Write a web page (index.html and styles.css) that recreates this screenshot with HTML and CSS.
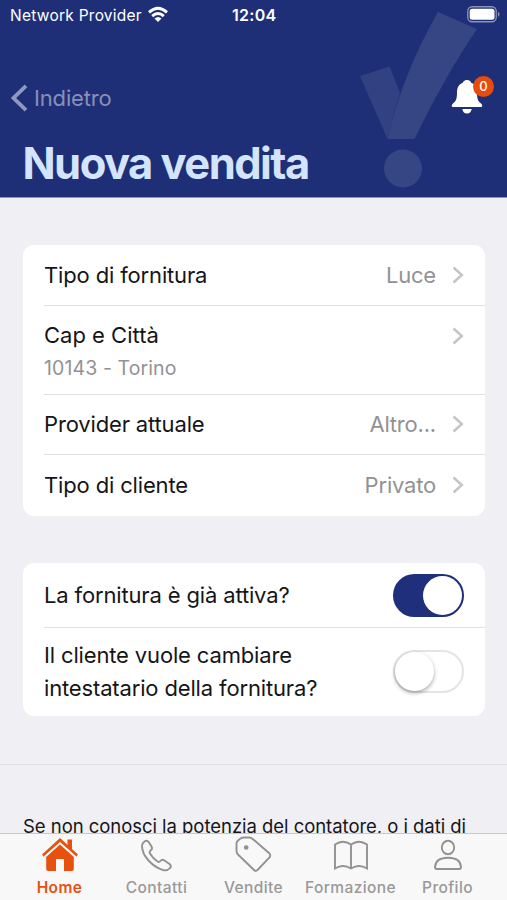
FILE: index.html
```html
<!DOCTYPE html>
<html lang="it">
<head>
<meta charset="utf-8">
<title>Nuova vendita</title>
<link rel="stylesheet" href="styles.css">
</head>
<body>
<div class="app">
  <header class="header">
    <svg class="mark" width="120" height="180" viewBox="0 0 120 180"><g fill="#364684"><path d="M0 64L29.500 54.500L40 81Q34 99 27.500 127Z" opacity=".8"/><path d="M78 0L117 17Q85 64 54.500 127H27.500Q42 63 78 0Z"/><circle cx="43" cy="156.500" r="19"/></g></svg>
    <div class="status">
      <span class="carrier">Network Provider</span>
      <svg class="wifi" width="20" height="16" viewBox="0 0 20 16" fill="none" stroke="#fff" stroke-width="2.900"><path d="M1 5.400Q10-2.800 19 5.400M4.200 9.100Q10 3.700 15.800 9.100"/><path d="M6.500 11.500Q10 8.500 13.500 11.500L10 15Z" fill="#fff" stroke="none"/></svg>
      <span class="clock">12:04</span>
      <svg class="battery" width="34" height="17" viewBox="0 0 34 17"><rect x=".75" y=".75" width="28.500" height="15" rx="4.500" fill="none" stroke="#8b94bb" stroke-width="1.300"/><rect x="2.700" y="2.700" width="24.800" height="11.100" rx="2.500" fill="#fff"/><path d="M31 5.500Q34 8.200 31 11Z" fill="#8b94bb"/></svg>
    </div>
    <div class="nav">
      <a class="back"><svg width="18" height="28" viewBox="0 0 18 28" fill="none" stroke="#8f98be" stroke-width="3.800"><path d="M16 1.800L3.500 14L16 26.200"/></svg><span>Indietro</span></a>
      <div class="bell">
        <svg width="32" height="36" viewBox="0 0 32 36" fill="#fff"><path d="M16 1C18.600 1 19.800 2.600 20.200 3.700C24.800 5.400 26 9.500 26 14C26 20 27 22 30 24.500C32 26.500 31.300 28 29.800 28H2.200C.7 28 0 26.500 2 24.500C5 22 6 20 6 14C6 9.500 7.200 5.400 11.800 3.700C12.200 2.600 13.400 1 16 1Z"/><path d="M11.300 30H20.700Q19.800 34.500 16 34.500T11.300 30Z"/></svg>
        <span class="badge">0</span>
      </div>
    </div>
    <h1>Nuova vendita</h1>
  </header>
  <main>
    <section class="card">
      <div class="row"><span class="label">Tipo di fornitura</span><span class="value">Luce</span><svg class="chev" viewBox="0 0 12 18"><path d="M1.500 1.500L9.800 9L1.500 16.500"/></svg></div>
      <div class="row tall"><div class="stack"><span class="label wide">Cap e Città</span><span class="sub">10143 - Torino</span></div><svg class="chev" viewBox="0 0 12 18"><path d="M1.500 1.500L9.800 9L1.500 16.500"/></svg></div>
      <div class="row"><span class="label">Provider attuale</span><span class="value">Altro...</span><svg class="chev" viewBox="0 0 12 18"><path d="M1.500 1.500L9.800 9L1.500 16.500"/></svg></div>
      <div class="row"><span class="label">Tipo di cliente</span><span class="value">Privato</span><svg class="chev" viewBox="0 0 12 18"><path d="M1.500 1.500L9.800 9L1.500 16.500"/></svg></div>
    </section>
    <section class="card switches">
      <div class="row"><span class="label">La fornitura è già attiva?</span><span class="switch on"><i></i></span></div>
      <div class="row double"><span class="label">Il cliente vuole cambiare<br>intestatario della fornitura?</span><span class="switch"><i></i></span></div>
    </section>
    <p class="note">Se non conosci la potenzia del contatore, o i dati di</p>
  </main>
  <nav class="tabs">
    <a class="tab active"><svg width="40" height="38" viewBox="0 0 40 38"><path d="M20 3L38 19.500L36.500 21.500L20 7L3.500 21.500L2 19.500ZM27.500 4.500H32V14L27.500 10Z"/><path d="M20 9.500L33.800 22V34Q33.800 36 31.800 36H24V24H16V36H8.200Q6.200 36 6.200 34V22Z"/></svg><span>Home</span></a>
    <a class="tab"><svg width="40" height="38" viewBox="0 0 40 38"><path d="M5 10.500Q5 8.500 7.500 6.500Q10 4.800 12 7.500L14.500 11.500Q16 14 13.500 15.500Q12 17 13 18.500Q16 23.500 20.500 26.500Q22 27.500 23.300 26Q25 24 27.500 25.500L32.500 29Q35 31 33 33Q30 36.500 25.500 34.800Q18 32.500 11.500 25.500Q5 18.500 5 10.500Z"/></svg><span>Contatti</span></a>
    <a class="tab"><svg width="40" height="38" viewBox="0 0 40 38"><path d="M2.500 8.500Q2.500 7 4 5.500L6.500 3.500Q8 2.500 10 2.500H15Q17 2.500 19 4.200L35.500 18.500Q37 20.500 35.500 22.300L23.500 35Q21.700 36.700 20 35L4.500 20Q2.500 18.500 2.500 16Z"/><circle cx="12.200" cy="12.500" r="1.400" fill="#929292"/></svg><span>Vendite</span></a>
    <a class="tab"><svg width="40" height="38" viewBox="0 0 40 38"><path d="M20 9.500Q16 6.800 12 6.800T4 9.500V33.500Q8 31 12 31T20 33.500Q24 31 28 31T36 33.500V9.500Q32 6.800 28 6.800T20 9.500V33.500"/></svg><span>Formazione</span></a>
    <a class="tab"><svg width="40" height="38" viewBox="0 0 40 38"><ellipse cx="20" cy="12.500" rx="6.200" ry="6.700"/><path d="M7 32Q7.500 22.800 20 22.800T33 32Q33 34 31 34H9Q7 34 7 32Z"/></svg><span>Profilo</span></a>
  </nav>
</div>
</body>
</html>
```
FILE: styles.css
```css
* { box-sizing: border-box; }
body { margin: 0; font-family: Inter, "Liberation Sans", sans-serif; background: #efeff4; color: #151517; }
.app { width: 507px; height: 900px; display: flex; flex-direction: column; overflow: hidden; }
.header { height: 198px; flex: none; background: #1f2f77; border-bottom: 1px solid #8c95bc; position: relative; }
.mark { position: absolute; left: 360px; top: 12px; }
.status { position: relative; height: 30px; display: grid; grid-template-columns: 148px 20px 1fr 34px; align-items: center; padding: 0 6px 0 10px; color: #fff; }
.wifi { margin-left: -10px; margin-top: -1px; overflow: visible; width: 20px; }
.carrier { font-size: 15.500px; letter-spacing: .25px; white-space: nowrap; }
.clock { font-size: 16px; font-weight: 600; letter-spacing: .3px; padding-left: 54px; }
.battery { margin-top: -2px; }
.nav { position: relative; height: 78px; margin-top: 28px; display: flex; justify-content: space-between; padding: 20px 13px 0 10px; }
.back { display: flex; align-items: center; height: 40px; gap: 6px; color: #8790b8; font-size: 22px; letter-spacing: -.15px; }
.back svg { flex: none; }
.bell { position: relative; width: 43px; padding-top: 1px; }
.badge { position: absolute; left: 22px; top: -2px; width: 21px; height: 21px; border-radius: 50%; background: #e84b0b; color: #fff; font-size: 13px; font-weight: 500; line-height: 21px; text-align: center; }
h1 { position: relative; margin: 0; padding-left: 22.500px; font-size: 43.500px; line-height: 54px; font-weight: 700; letter-spacing: -1.550px; color: #d5e4fd; white-space: nowrap; }
main { flex: 1; min-height: 0; overflow: hidden; padding-top: 47px; }
.card { margin: 0 22px 47px 23px; padding-left: 21px; background: #fff; border-radius: 11px; }
.row { height: 60.500px; display: flex; align-items: center; padding-right: 21px; border-bottom: 1.500px solid #e0e0e3; }
.row:last-child { border-bottom: 0; }
.tall { height: 89px; align-items: flex-start; }
.tall .chev { margin-top: 21px; }
.label { font-size: 22px; line-height: 33px; letter-spacing: -.15px; white-space: nowrap; }
.wide { letter-spacing: 0; }
.row > .label { padding-top: 1px; }
.value { margin-left: auto; margin-right: 16px; color: #929295; font-size: 22px; letter-spacing: -.2px; }
.stack { flex: 1; display: flex; flex-direction: column; padding-top: 13px; }
.sub { font-size: 19.500px; line-height: 32px; letter-spacing: .1px; color: #929295; }
.chev { width: 12px; height: 18px; flex: none; fill: none; stroke: #c5c5c9; stroke-width: 2.500; }
.switches { margin-bottom: 48px; }
.switches .row { height: 65px; justify-content: space-between; }
.switches .double { height: 88px; }
.switch { width: 71px; height: 43px; border-radius: 22px; border: 2px solid #e4e4e6; background: #fff; position: relative; flex: none; }
.switch i { display: block; width: 39px; height: 39px; border-radius: 50%; background: #fff; box-shadow: 0 2px 4px #0005; }
.switch.on { background: #1f2f7c; border-color: #1f2f7c; margin-top: 2px; }
.switch.on i { margin-left: 28px; box-shadow: none; }
.note { margin: 0; border-top: 1px solid #dfdfe5; padding: 48px 0 0 23px; font-size: 18.500px; letter-spacing: -.04px; line-height: 27px; white-space: nowrap; }
.tabs { position: relative; height: 67px; flex: none; background: #f8f8f8; border-top: 1px solid #c8c8cb; display: grid; grid-template-columns: repeat(5, 97px); padding-left: 11px; }
.tab { display: flex; flex-direction: column; align-items: center; color: #999; font-size: 15.500px; font-weight: 500; letter-spacing: .4px; line-height: 20px; padding-top: 1px; gap: 5px; }
.tab svg { fill: none; stroke: #929292; stroke-width: 1.900; flex: none; }
.tab.active { color: #e8500e; font-weight: 600; }
.tab.active svg { fill: #e8500e; stroke: none; }
```
